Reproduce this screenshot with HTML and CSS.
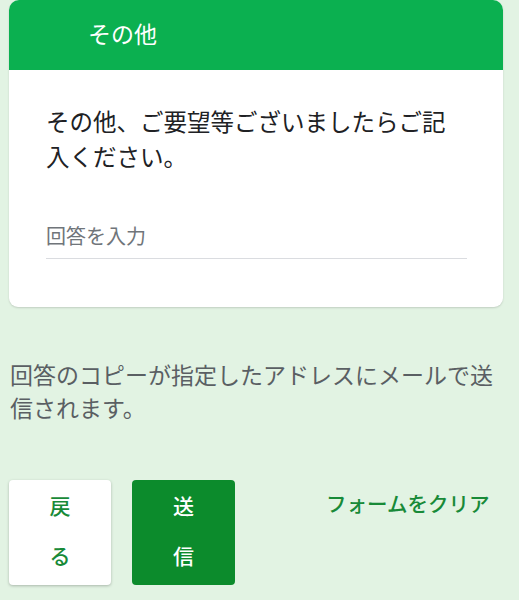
FILE: index.html
```html
<!DOCTYPE html>
<html lang="ja">
<head>
<meta charset="utf-8">
<link rel="stylesheet" href="styles.css">
</head>
<body>
<div class="page">
  <section class="card">
    <div class="card-head">その他</div>
    <div class="card-body">
      <div class="question">その他、ご要望等ございましたらご記入ください。</div>
      <div class="answer"><span class="placeholder">回答を入力</span></div>
    </div>
  </section>
  <p class="note">回答のコピーが指定したアドレスにメールで送信されます。</p>
  <div class="actions">
    <button class="btn btn-back">戻る</button>
    <button class="btn btn-send">送信</button>
    <button class="btn-clear">フォームをクリア</button>
  </div>
</div>
</body>
</html>
```
FILE: styles.css
```css
html, body {
  margin: 0;
  padding: 0;
  background: #e2f3e3;
}
body {
  font-family: "Noto Sans CJK JP", "Noto Sans", sans-serif;
  height: 600px;
  overflow: hidden;
}
.page {
  padding: 0 0 0 9px;
}
.card {
  width: 494px;
  background: #fff;
  border-radius: 10px 10px 9px 9px;
  box-shadow: 0 1px 2px rgba(0,0,0,0.15);
  overflow: hidden;
}
.card-head {
  height: 70px;
  background: #0bb050;
  color: #fff;
  font-size: 23px;
  line-height: 67px;
  padding-left: 79px;
}
.card-body {
  padding: 34px 36px 48px 37px;
}
.question {
  font-size: 23.5px;
  line-height: 35px;
  color: #202124;
}
.answer {
  margin-top: 38px;
  width: 421px;
  height: 46px;
  border-bottom: 1px solid #dadce0;
  display: flex;
  align-items: center;
}
.placeholder {
  font-size: 20px;
  color: #70757a;
}
.note {
  margin: 51px 0 0 1px;
  width: 500px;
  font-size: 23px;
  line-height: 33px;
  color: #5a5f63;
}
.actions {
  margin-top: 56px;
  display: flex;
  align-items: flex-start;
  gap: 21px;
}
.btn {
  width: 103px;
  height: 105px;
  padding: 0 36px;
  border: none;
  border-radius: 4px;
  font-family: inherit;
  font-size: 21px;
  font-weight: 500;
  line-height: 50px;
  text-align: center;
  box-sizing: border-box;
  display: flex;
  align-items: flex-start;
  justify-content: center;
}
.btn-back {
  width: 102px;
  background: #fff;
  color: #188a38;
  box-shadow: 0 1px 3px rgba(0,0,0,0.25);
}
.btn-send {
  background: #0c8b2c;
  color: #fff;
}
.btn-clear {
  margin-left: 70px;
  margin-top: -2px;
  padding: 0;
  border: none;
  background: none;
  font-family: inherit;
  font-size: 20.5px;
  font-weight: 500;
  line-height: 50px;
  color: #188a38;
}
```
